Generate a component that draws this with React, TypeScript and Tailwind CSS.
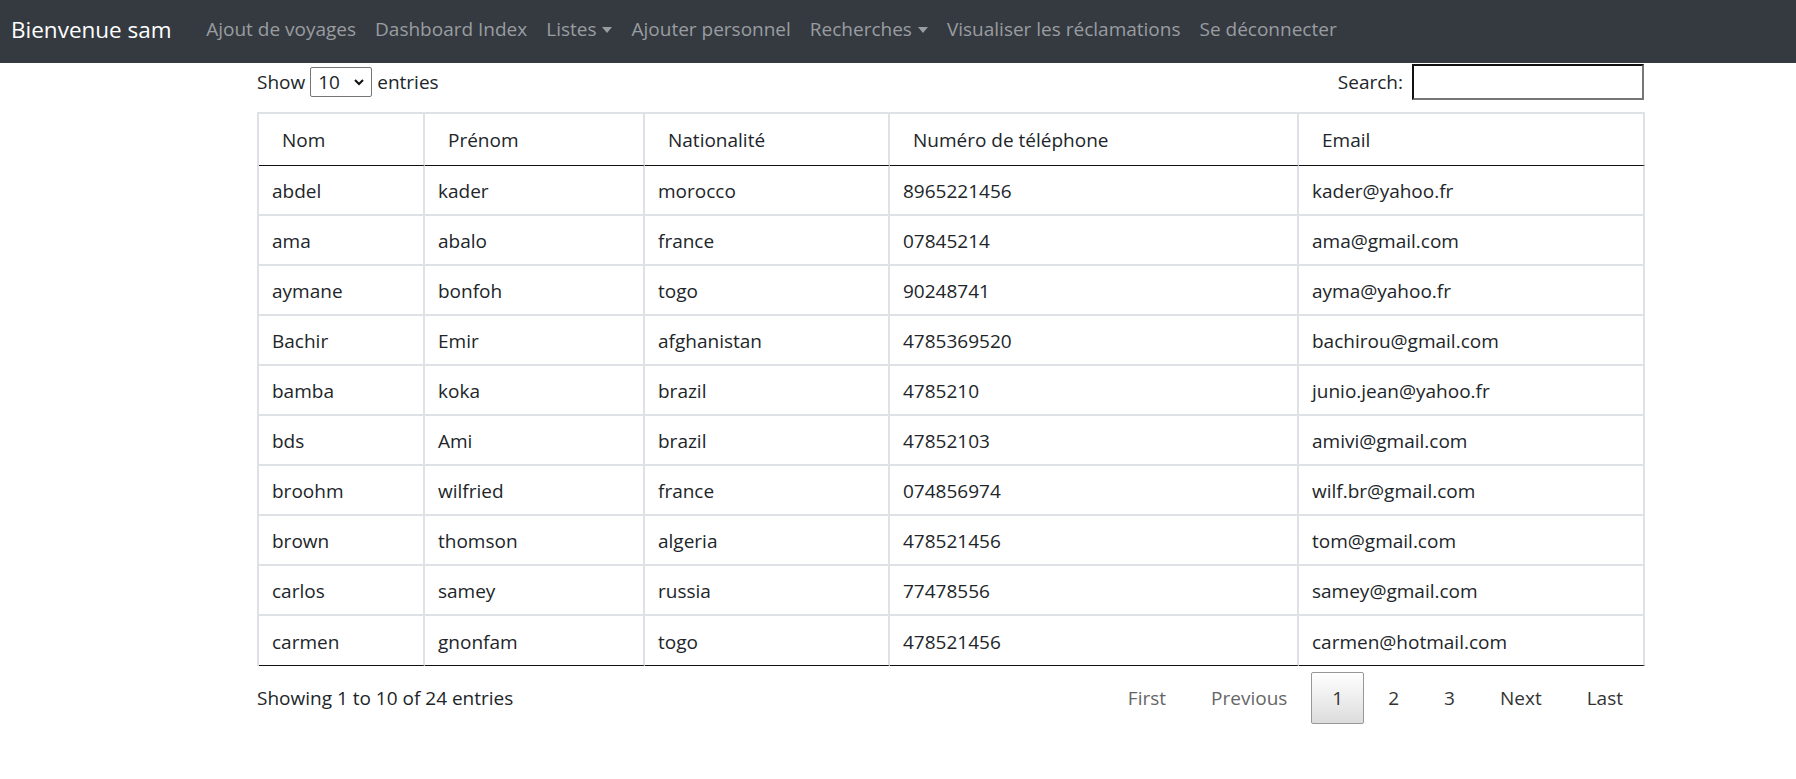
import React from 'react';

type Person = {
  nom: string;
  prenom: string;
  nationalite: string;
  telephone: string;
  email: string;
};

const people: Person[] = [
  { nom: 'abdel', prenom: 'kader', nationalite: 'morocco', telephone: '8965221456', email: 'kader@yahoo.fr' },
  { nom: 'ama', prenom: 'abalo', nationalite: 'france', telephone: '07845214', email: 'ama@gmail.com' },
  { nom: 'aymane', prenom: 'bonfoh', nationalite: 'togo', telephone: '90248741', email: 'ayma@yahoo.fr' },
  { nom: 'Bachir', prenom: 'Emir', nationalite: 'afghanistan', telephone: '4785369520', email: 'bachirou@gmail.com' },
  { nom: 'bamba', prenom: 'koka', nationalite: 'brazil', telephone: '4785210', email: 'junio.jean@yahoo.fr' },
  { nom: 'bds', prenom: 'Ami', nationalite: 'brazil', telephone: '47852103', email: 'amivi@gmail.com' },
  { nom: 'broohm', prenom: 'wilfried', nationalite: 'france', telephone: '074856974', email: 'wilf.br@gmail.com' },
  { nom: 'brown', prenom: 'thomson', nationalite: 'algeria', telephone: '478521456', email: 'tom@gmail.com' },
  { nom: 'carlos', prenom: 'samey', nationalite: 'russia', telephone: '77478556', email: 'samey@gmail.com' },
  { nom: 'carmen', prenom: 'gnonfam', nationalite: 'togo', telephone: '478521456', email: 'carmen@hotmail.com' },
];

const Caret: React.FC = () => (
  <span className="inline-block w-0 h-0 ml-[6px] border-x-[5px] border-x-transparent border-t-[6px] border-t-current align-middle" />
);

const NavLink: React.FC<{ label: string; dropdown?: boolean }> = ({ label, dropdown }) => (
  <a href="#" className="px-[9.5px] text-[19px] text-[#9a9da0] whitespace-nowrap flex items-center">
    {label}
    {dropdown && <Caret />}
  </a>
);

const PageButton: React.FC<{ label: string; current?: boolean; disabled?: boolean }> = ({ label, current, disabled }) => {
  let cls = 'ml-[3px] px-[20px] py-[11px] leading-[28px] border rounded-[2px] ';
  if (current) {
    cls += 'border-[#979797] bg-linear-to-b from-white to-[#dcdcdc] text-[#333]';
  } else if (disabled) {
    cls += 'border-transparent text-[#666]';
  } else {
    cls += 'border-transparent text-[#333]';
  }
  return <span className={cls}>{label}</span>;
};

const App: React.FC = () => {
  const cols = [
    { key: 'nom', label: 'Nom', w: 'w-[166px]' },
    { key: 'prenom', label: 'Prénom', w: 'w-[220px]' },
    { key: 'nationalite', label: 'Nationalité', w: 'w-[245px]' },
    { key: 'telephone', label: 'Numéro de téléphone', w: 'w-[409px]' },
    { key: 'email', label: 'Email', w: 'w-[346px]' },
  ] as const;

  return (
    <div className="min-h-screen bg-white text-[#212529] text-[19px]" style={{ fontFamily: '"Open Sans", "Noto Sans", sans-serif' }}>
      {/* navbar */}
      <nav className="h-[63px] bg-[#343a40] flex items-center px-[11px] pb-[4px]">
        <a href="#" className="text-[22.5px] text-white mr-[25px] whitespace-nowrap">Bienvenue sam</a>
        <NavLink label="Ajout de voyages" />
        <NavLink label="Dashboard Index" />
        <NavLink label="Listes" dropdown />
        <NavLink label="Ajouter personnel" />
        <NavLink label="Recherches" dropdown />
        <NavLink label="Visualiser les réclamations" />
        <NavLink label="Se déconnecter" />
      </nav>

      <div className="ml-[257px] w-[1387px]">
        {/* length + search */}
        <div className="flex justify-between items-center h-[36px] mt-[1px]">
          <div className="flex items-center">
            <span>Show</span>
            <div className="mx-[5px] w-[62px] h-[30px] border border-[#767676] rounded-[2px] flex items-center justify-between pl-[7px] pr-[6px]">
              <span>10</span>
              <svg width="12" height="12" viewBox="0 0 12 12">
                <path d="M2 4 L6 8 L10 4" fill="none" stroke="#111" strokeWidth="2" />
              </svg>
            </div>
            <span>entries</span>
          </div>
          <div className="flex items-center">
            <span>Search:</span>
            <input
              type="text"
              className="ml-[9px] w-[232px] h-[36px] border-2 border-t-[#111] border-l-[#111] border-r-[#767676] border-b-[#767676] outline-none"
            />
          </div>
        </div>

        {/* table */}
        <table className="mt-[12px] w-full border-separate border-spacing-0 table-fixed border-l-2 border-t-2 border-[#dee2e6]">
          <thead>
            <tr>
              {cols.map((c) => (
                <th
                  key={c.key}
                  className={`${c.w} h-[52px] pl-[23px] pt-[1px] text-left font-normal border-r-2 border-r-[#dee2e6] border-b border-b-[#111]`}
                >
                  {c.label}
                </th>
              ))}
            </tr>
          </thead>
          <tbody>
            {people.map((p, i) => {
              const last = i === people.length - 1;
              return (
                <tr key={p.nom}>
                  {cols.map((c) => (
                    <td
                      key={c.key}
                      className={`h-[50px] px-[13px] pt-[3px] border-r-2 border-r-[#dee2e6] ${last ? 'border-b border-b-[#111]' : 'border-b-2 border-b-[#dee2e6]'}`}
                    >
                      {p[c.key]}
                    </td>
                  ))}
                </tr>
              );
            })}
          </tbody>
        </table>

        {/* info + pagination */}
        <div className="flex justify-between items-center mt-[6px]">
          <span>Showing 1 to 10 of 24 entries</span>
          <div className="flex items-center">
            <PageButton label="First" disabled />
            <PageButton label="Previous" disabled />
            <PageButton label="1" current />
            <PageButton label="2" />
            <PageButton label="3" />
            <PageButton label="Next" />
            <PageButton label="Last" />
          </div>
        </div>
      </div>
    </div>
  );
};

export default App;
